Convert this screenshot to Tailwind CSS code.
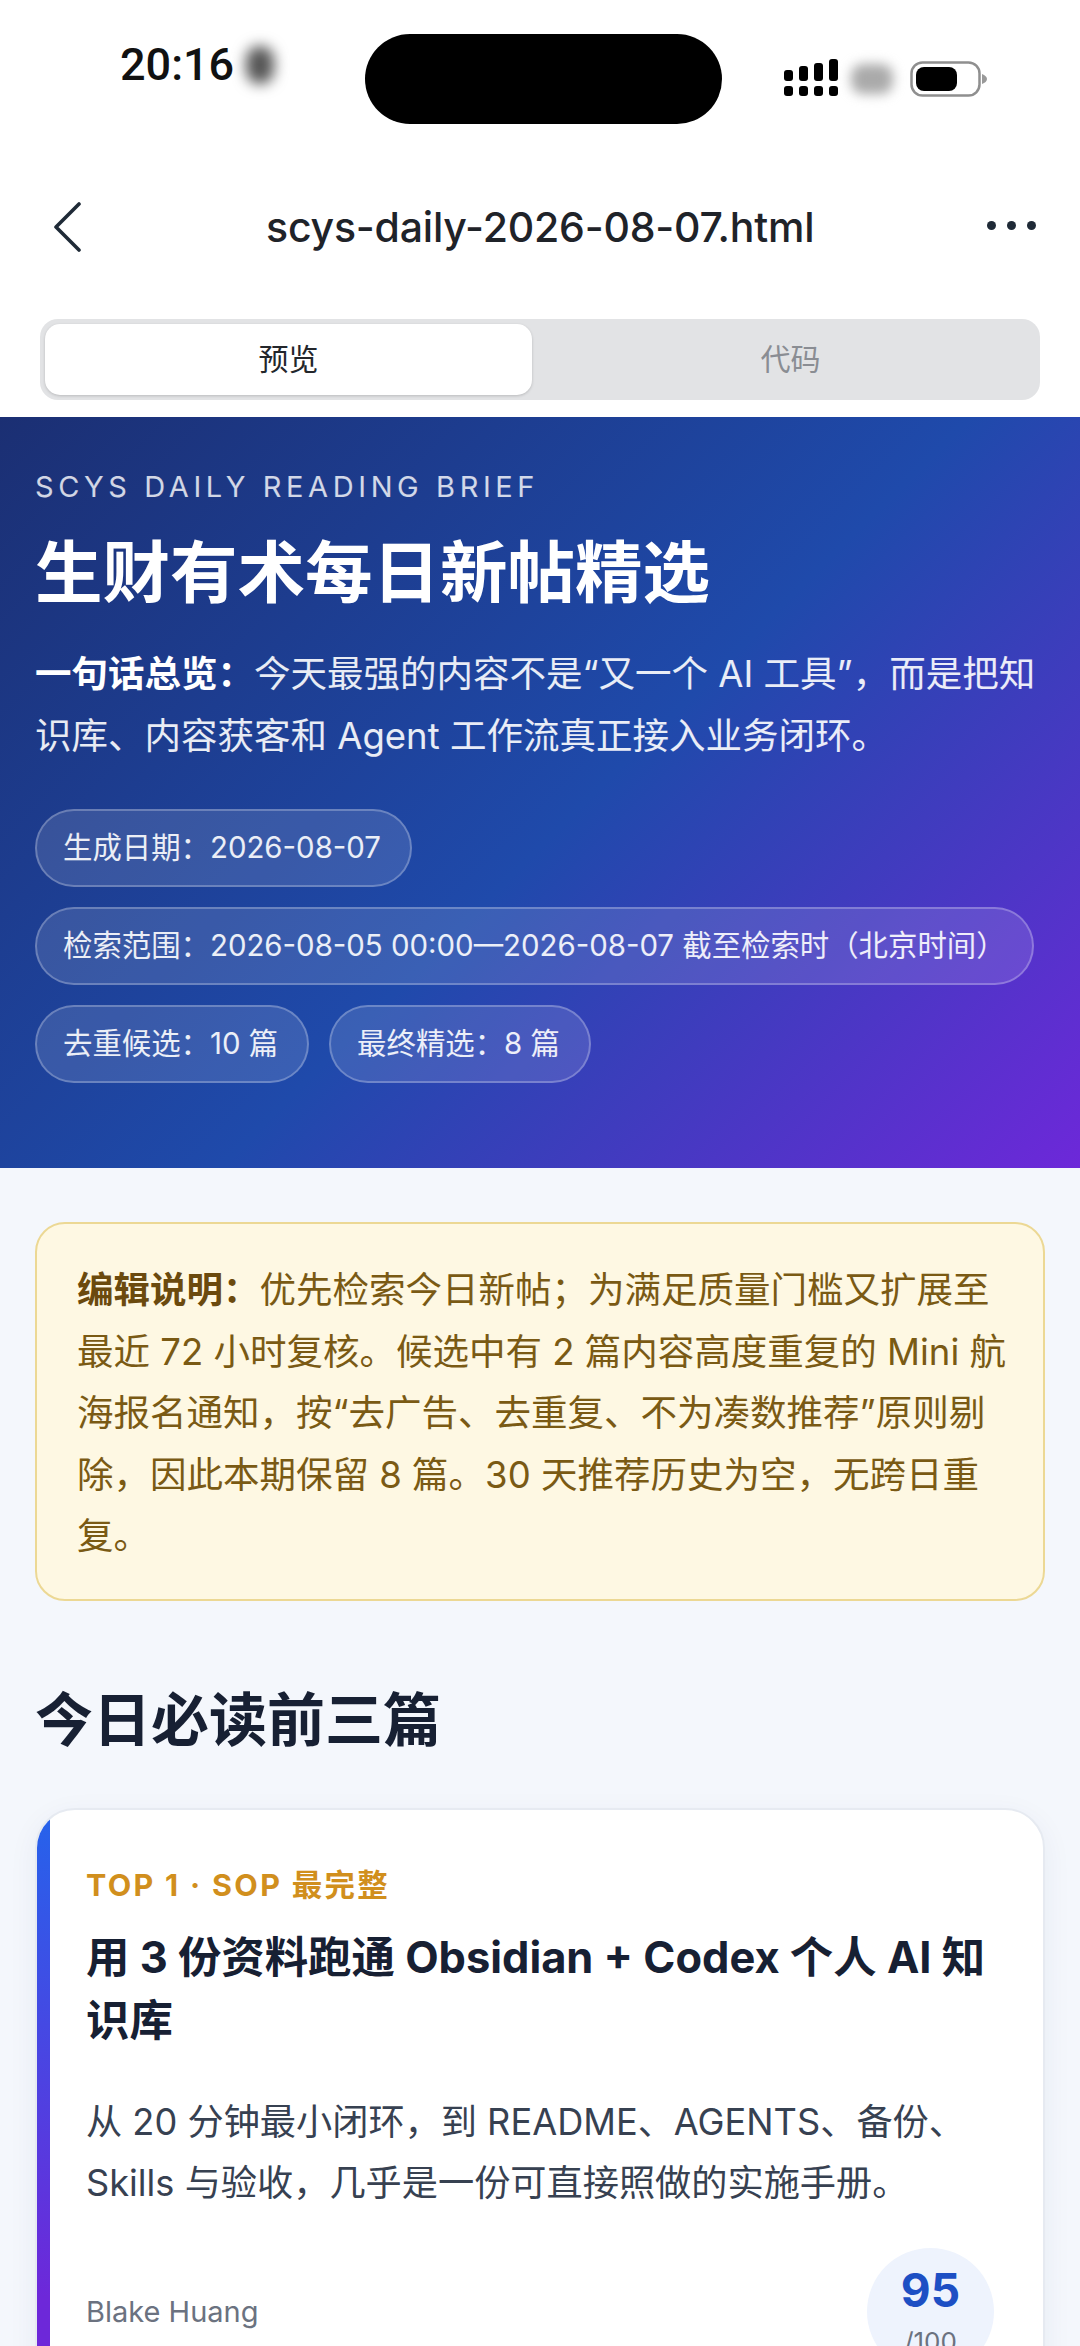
<!DOCTYPE html>
<html lang="zh-CN">
<head>
  <meta charset="UTF-8">
  <meta name="viewport" content="width=device-width, initial-scale=1.0">
  <title>scys-daily-2026-08-07.html</title>
  <script src="https://cdn.jsdelivr.net/npm/@tailwindcss/browser@4"></script>
</head>
<body class="bg-white font-['Inter','Noto_Sans_CJK_SC',sans-serif]">
<div class="w-[1080px] h-[2346px] overflow-hidden bg-[#f4f7fc]">

  <!-- 顶部白色区域 -->
  <div class="bg-white h-[417px]">
    <!-- 状态栏 -->
    <div class="flex items-start h-[124px] pt-[34px]">
      <div class="w-[365px] h-[60px] pl-[120px] flex items-center">
        <span class="font-['Roboto',sans-serif] font-medium text-[45px] leading-none text-[#111]">20:16</span>
        <span class="ml-[12px] mt-[2px] w-[28px] h-[38px] rounded-full bg-[#555] blur-[7px]"></span>
      </div>
      <div class="w-[357px] h-[90px] rounded-[45px] bg-black"></div>
      <div class="h-[90px] flex items-center pl-[61px]">
        <svg class="w-[56px] h-[38px] -mt-[2px]" viewBox="0 0 56 38" fill="#000">
          <rect x="1" y="11" width="9" height="11" rx="3"/><rect x="16" y="7" width="9" height="15" rx="3"/><rect x="31" y="4" width="9" height="18" rx="3"/><rect x="46" y="0" width="9" height="22" rx="3"/>
          <rect x="1" y="27" width="9" height="10" rx="3"/><rect x="16" y="27" width="9" height="10" rx="3"/><rect x="31" y="27" width="9" height="10" rx="3"/><rect x="46" y="27" width="9" height="10" rx="3"/>
        </svg>
        <span class="ml-[12px] w-[42px] h-[30px] rounded-[12px] bg-[#aaa] blur-[6px]"></span>
        <svg class="ml-[17px] w-[78px] h-[36px]" viewBox="0 0 78 36">
          <rect x="1.5" y="1.5" width="68" height="33" rx="11" fill="#fff" stroke="#8f8f8f" stroke-width="2.5"/>
          <rect x="6" y="6" width="41" height="24" rx="8" fill="#000"/>
          <path d="M72 13c3 1 5 3 5 5s-2 4-5 5z" fill="#999"/>
        </svg>
      </div>
    </div>

    <!-- 标题栏 -->
    <div class="mt-[18px] h-[170px] flex items-center pl-[54px]">
      <svg class="w-[28px] h-[50px]" viewBox="0 0 28 50" fill="none" stroke="#1f2a37" stroke-width="3.6" stroke-linecap="round" stroke-linejoin="round"><path d="M25 2 2 25l23 23"/></svg>
      <div class="ml-[184px] text-[41px] leading-none font-medium text-[#1f2329] tracking-[-0.2px] whitespace-nowrap">scys-daily-2026-08-07.html</div>
      <div class="ml-[173px] -mt-[3px] flex gap-[11px]">
        <span class="w-[9px] h-[9px] rounded-full bg-[#1f2a37]"></span>
        <span class="w-[9px] h-[9px] rounded-full bg-[#1f2a37]"></span>
        <span class="w-[9px] h-[9px] rounded-full bg-[#1f2a37]"></span>
      </div>
    </div>

    <!-- 预览/代码 切换 -->
    <div class="mt-[7px] mx-[40px] h-[81px] p-[5px] rounded-[18px] bg-[#e2e3e5] flex">
      <div class="w-[487px] rounded-[15px] bg-white shadow-[0_1px_3px_rgba(0,0,0,0.18)] flex items-center justify-center text-[30px] text-[#23262b]">预览</div>
      <div class="flex-1 pl-[14px] flex items-center justify-center text-[30px] text-[#8a8d93]">代码</div>
    </div>
  </div>

  <!-- Hero -->
  <header class="h-[751px] px-[35px] pt-[52px] bg-[linear-gradient(135deg,#1b2f73_0%,#1f4aab_53%,#6d28d9_100%)] text-white">
    <p class="text-[29px] leading-[36px] tracking-[4.6px] text-white/80">SCYS DAILY READING BRIEF</p>
    <h1 class="mt-[23px] text-[67.5px] leading-[90px] font-bold">生财有术每日新帖精选</h1>
    <p class="mt-[26px] text-[36.5px] leading-[61.5px] text-white/90"><strong class="font-bold text-white">一句话总览：</strong>今天最强的内容不是“又一个 AI 工具”，而是把知识库、内容获客和 Agent 工作流真正接入业务闭环。</p>
    <div class="mt-[42px] flex flex-wrap gap-x-[20px] gap-y-[20px]">
      <span class="h-[78px] pl-[26px] pr-[29px] flex items-center rounded-full border-2 border-white/25 bg-white/12 text-[29.4px] text-white/90 whitespace-nowrap">生成日期：2026-08-07</span>
      <span class="h-[78px] px-[26px] flex items-center rounded-full border-2 border-white/25 bg-white/12 text-[29.4px] text-white/90 whitespace-nowrap">检索范围：2026-08-05 00:00—2026-08-07 截至检索时（北京时间）</span>
      <span class="h-[78px] pl-[26px] pr-[29px] flex items-center rounded-full border-2 border-white/25 bg-white/12 text-[29.4px] text-white/90 whitespace-nowrap">去重候选：10 篇</span>
      <span class="h-[78px] pl-[26px] pr-[29px] flex items-center rounded-full border-2 border-white/25 bg-white/12 text-[29.4px] text-white/90 whitespace-nowrap">最终精选：8 篇</span>
    </div>
  </header>

  <main class="px-[35px] pt-[54px]">
    <!-- 编辑说明 -->
    <section class="h-[379px] w-[1010px] pl-[40px] pr-[31px] pt-[36px] rounded-[30px] border-2 border-[#ecd894] bg-[#fef8e3] text-[36.5px] leading-[61.5px] text-[#7a5a14]">
      <strong class="font-bold text-[#6b4a0e]">编辑说明：</strong>优先检索今日新帖；为满足质量门槛又扩展至最近 72 小时复核。候选中有 2 篇内容高度重复的 Mini 航海报名通知，按“去广告、去重复、不为凑数推荐”原则剔除，因此本期保留 8 篇。30 天推荐历史为空，无跨日重复。
    </section>

    <h2 class="mt-[79px] text-[58px] leading-[80px] font-bold text-[#172033]">今日必读前三篇</h2>

    <!-- 卡片 -->
    <article class="relative mt-[48px] w-[1010px] h-[700px] rounded-[40px] border-2 border-[#e6eaf1] bg-white shadow-[0_8px_30px_rgba(30,50,100,0.06)] overflow-hidden pl-[49px] pr-[49px] pt-[55px]">
      <div class="absolute left-0 top-0 bottom-0 w-[13px] bg-[linear-gradient(180deg,#2563eb,#6d28d9_70%)]"></div>
      <p class="text-[30.5px] leading-[40px] font-bold tracking-[2.3px] text-[#d18f1d]">TOP 1 · SOP 最完整</p>
      <h3 class="mt-[21px] text-[43.4px] leading-[63px] font-bold text-[#172033]">用 3 份资料跑通 Obsidian + Codex 个人 AI 知识库</h3>
      <p class="mt-[40px] text-[36.2px] leading-[61px] text-[#374151]">从 20 分钟最小闭环，到 README、AGENTS、备份、Skills 与验收，几乎是一份可直接照做的实施手册。</p>
      <div class="mt-[34px] flex items-start justify-between">
        <span class="mt-[44px] text-[29px] leading-[40px] text-[#6b7280]">Blake Huang</span>
        <div class="w-[127px] h-[127px] rounded-full bg-[#eef3fd] flex flex-col items-center pt-[14px]">
          <span class="text-[46px] leading-[56px] font-bold text-[#1d4fc4]">95</span>
          <span class="mt-[8px] text-[26px] leading-[32px] text-[#6b7280]">/100</span>
        </div>
      </div>
    </article>
  </main>
</div>
</body>
</html>
